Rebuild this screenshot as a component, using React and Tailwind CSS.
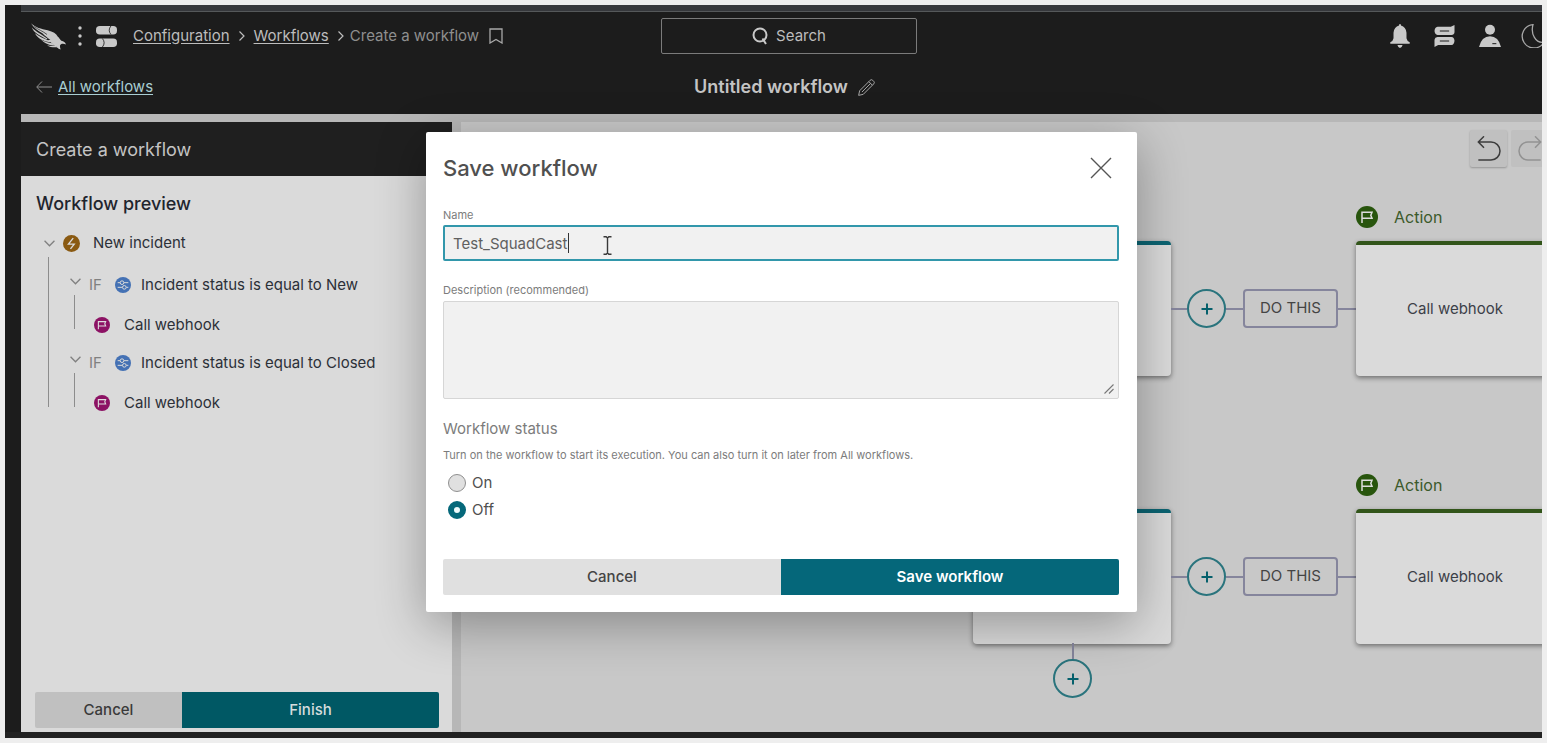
import React, { useState } from "react";

function FalconLogo() {
  return (
    <svg className="w-[35px] h-[27px]" viewBox="0 0 105 80" fill="#c9c9c9" aria-hidden="true">
      <path d="M0 0 C14 13 30 17 50 21 C66 25 76 31 80 40 C85 44 87 49 91 53 C98 54 103 58 105 64 C99 61 94 61 90 63 C86 65 86 69 89 79 C80 76 76 70 69 66 C64 60 58 57 50 51 L58 50 C50 44 42 38 34 30 C20 23 8 13 0 0 Z" />
      <path d="M2 12 C14 26 32 32 50 47 L46 48 C30 38 8 30 2 12 Z" />
      <path d="M12 30 C24 40 38 46 58 54 L56 57 C38 54 20 46 12 30 Z" />
      <path d="M30 49 C40 57 52 58 64 60 L72 67 C56 67 42 62 30 49 Z" />
      <path d="M48 66 C56 69 64 68 74 68 L78 72 C68 73 56 72 48 66 Z" />
      <path d="M10 10 C22 20 36 24 48 34" stroke="#1c1c1c" strokeWidth="2" fill="none" />
    </svg>
  );
}

function TogglesIcon() {
  return (
    <svg className="w-[21px] h-[21px]" viewBox="0 0 62 62" aria-hidden="true">
      <rect x="0" y="0" width="62" height="25" rx="11" fill="#c9c9c9" />
      <rect x="0" y="37" width="62" height="25" rx="11" fill="#c9c9c9" />
      <path d="M44 0 Q34 12.500 44 25 M19 37 Q29 49.500 19 62" fill="none" stroke="#1c1c1c" strokeWidth="2.500" />
    </svg>
  );
}

function Chevron({ className }) {
  return (
    <svg className={className} viewBox="0 0 10 10" fill="none" stroke="currentColor" aria-hidden="true">
      <path d="M0.500 2.500 L5 7 L9.500 2.500" strokeWidth="1.200" />
    </svg>
  );
}

function FlagBadge({ className, color }) {
  return (
    <svg className={className} viewBox="0 0 22 22" aria-hidden="true">
      <circle cx="11" cy="11" r="11" fill={color} />
      <path d="M6 17 V6.300 H16 L14.800 9.300 L16 12.300 H6" fill="none" stroke="#dddddd" strokeWidth="1.500" />
    </svg>
  );
}

function BoltBadge() {
  return (
    <svg className="size-[17px] shrink-0" viewBox="0 0 50 50" aria-hidden="true">
      <circle cx="25" cy="25" r="25" fill="#8a5a12" />
      <path d="M30 9 L16 27 H33 L22 41" fill="none" stroke="#dadada" strokeWidth="4" />
    </svg>
  );
}

function ConditionBadge() {
  return (
    <svg className="size-4 shrink-0" viewBox="0 0 48 48" fill="none" stroke="#dadada" strokeWidth="3" aria-hidden="true">
      <circle cx="24" cy="24" r="24" fill="#4471b4" stroke="none" />
      <path d="M8 17 H15 M27 17 H40 M8 31 H22 M34 31 H40" />
      <circle cx="21" cy="17" r="5.500" />
      <circle cx="28" cy="31" r="5.500" />
    </svg>
  );
}

function Header() {
  return (
    <header className="bg-[#1c1c1c] h-[102px] shrink-0 text-[#bdbdbd]">
      <div className="grid grid-cols-[1fr_256px_1fr] items-center h-12">
        <div className="flex items-center pl-[10px]">
          <a href="#home" aria-label="Home"><FalconLogo /></a>
          <svg className="w-1 h-5 ml-3" viewBox="0 0 4 20" fill="#c9c9c9" aria-hidden="true">
            <circle cx="2" cy="2" r="1.700" /><circle cx="2" cy="10" r="1.700" /><circle cx="2" cy="18" r="1.700" />
          </svg>
          <span className="ml-[14px]"><TogglesIcon /></span>
          <nav aria-label="Breadcrumb" className="flex items-center text-[15px] ml-4 whitespace-nowrap">
            <a href="#configuration" className="underline underline-offset-2">Configuration</a>
            <Chevron className="size-[10px] mx-[7px] -rotate-90" />
            <a href="#workflows" className="underline underline-offset-2">Workflows</a>
            <Chevron className="size-[10px] ml-[7px] mr-1 -rotate-90" />
            <span className="text-[#8f8f8f]">Create a workflow</span>
          </nav>
          <button aria-label="Bookmark" className="ml-[10px]">
            <svg className="w-[14px] h-4" viewBox="0 0 14 16" fill="none" stroke="#a8a8a8" strokeWidth="1.300" aria-hidden="true">
              <path d="M1 1 H13 V15 L7 11.500 L1 15 Z" />
            </svg>
          </button>
        </div>
        <button className="flex items-center justify-center gap-2 h-9 border border-[#7b7b7b] rounded-xs text-[15px]">
          <svg className="w-4 h-[18px]" viewBox="0 0 16 18" fill="none" stroke="#c9c9c9" strokeWidth="2" aria-hidden="true">
            <circle cx="8" cy="8" r="6.500" /><path d="M10.500 11.500 L14 17" />
          </svg>
          Search
        </button>
        <div className="flex items-center justify-end gap-6 pr-3">
          <button aria-label="Notifications">
            <svg className="w-5 h-6" viewBox="0 0 60 74" fill="#c9c9c9" aria-hidden="true">
              <path d="M27 2 Q30 -2 33 2 V5 Q48 9 50 27 V44 Q51 52 60 56 V61 H0 V56 Q9 52 10 44 V27 Q12 9 27 5 Z M22 65 H38 Q36 73 30 74 Q24 73 22 65 Z" />
            </svg>
          </button>
          <button aria-label="Messages">
            <svg className="w-[21px] h-[22px]" viewBox="0 0 62 66" aria-hidden="true">
              <path d="M10 5 H50 L61 0 V22 Q60 30 52 30 H10 Q2 29 1 18 Q2 6 10 5 Z M10 36 H52 Q60 37 61 47 Q60 59 52 60 H12 L1 66 V44 Q2 37 10 36 Z" fill="#c9c9c9" />
              <path d="M17 18 H45 M17 48 H45" stroke="#1c1c1c" strokeWidth="3" />
            </svg>
          </button>
          <button aria-label="Account">
            <svg className="w-[22px] h-6" viewBox="0 0 66 72" fill="#c9c9c9" aria-hidden="true">
              <circle cx="33" cy="17" r="15" />
              <path d="M0 69 Q8 37 33 37 Q58 37 66 69 Z" />
              <path d="M40 59 H52" stroke="#1c1c1c" strokeWidth="3" />
            </svg>
          </button>
          <button aria-label="Dark mode" className="-ml-1">
            <svg className="w-6 h-6" viewBox="0 0 72 74" fill="none" stroke="#a8a8a8" strokeWidth="4" aria-hidden="true">
              <path d="M36 2 A36 36 0 1 0 70 56 C44 60 28 30 36 2 Z" />
            </svg>
          </button>
        </div>
      </div>
      <div className="grid grid-cols-[1fr_auto_1fr] items-center h-[54px] pl-[15px] pr-6">
        <a href="#all-workflows" className="flex items-center gap-[6px] text-[15px] text-[#a9cdd2]">
          <svg className="w-4 h-3" viewBox="0 0 16 12" fill="none" stroke="#8f8f8f" aria-hidden="true">
            <path d="M16 6 H1 M6 0.500 L0.700 6 L6 11.500" />
          </svg>
          <span className="underline underline-offset-2">All workflows</span>
        </a>
        <h1 className="flex items-center gap-[10px] text-lg font-semibold text-[#c4c4c4]">
          Untitled workflow
          <button aria-label="Rename workflow">
            <svg className="size-[17px]" viewBox="0 0 52 52" fill="none" stroke="#a8a8a8" strokeWidth="3" aria-hidden="true">
              <path d="M2 50 L5 36 L37 4 Q41 0 45 4 L48 7 Q52 11 48 15 L16 47 Z M33 8 L44 19 M38 14 L12 40" />
            </svg>
          </button>
        </h1>
      </div>
    </header>
  );
}

function Branch({ label }) {
  return (
    <li>
      <div className="flex items-center h-5 pl-[22px]">
        <Chevron className="size-[11px] mb-2 text-[#808080]" />
        <span className="ml-2 w-[26px] text-[#808080]">IF</span>
        <ConditionBadge />
        <span className="ml-[10px]">{label}</span>
      </div>
      <div className="relative pt-5 pb-[18px] before:absolute before:left-[26px] before:top-0 before:h-[34px] before:w-px before:bg-[#8c8c8c]">
        <div className="flex items-center h-5 pl-[46px] gap-[14px]">
          <FlagBadge className="size-4" color="#8c1264" />
          Call webhook
        </div>
      </div>
    </li>
  );
}

function Sidebar() {
  return (
    <aside className="w-[431px] shrink-0 flex flex-col bg-[#dadada]">
      <h2 className="bg-[#1f1f1f] text-[#c4c4c4] text-lg h-[54px] shrink-0 flex items-center px-[15px] pt-[2px]">Create a workflow</h2>
      <div className="flex-1 px-[15px] pt-[14px] text-[15px] text-[#2c3038]">
        <h3 className="text-lg font-medium leading-7 text-[#1f252e]">Workflow preview</h3>
        <div className="flex items-center h-5 mt-[15px] pl-2">
          <Chevron className="size-[11px] text-[#808080]" />
          <span className="flex ml-2 mr-[13px]"><BoltBadge /></span>
          New incident
        </div>
        <ul className="relative ml-3 pt-[22px] before:absolute before:left-0 before:top-1 before:h-[150px] before:w-px before:bg-[#8c8c8c]">
          <Branch label="Incident status is equal to New" />
          <Branch label="Incident status is equal to Closed" />
        </ul>
      </div>
      <div className="flex pl-[14px] pr-[13px] pb-1 text-[15px] font-medium">
        <button className="w-[147px] h-9 bg-[#c0c0c0] text-[#3a3a3a] rounded-l-xs">Cancel</button>
        <button className="flex-1 h-9 bg-[#005864] text-[#d5dcdd] rounded-r-xs">Finish</button>
      </div>
    </aside>
  );
}

function AddStep() {
  return (
    <button aria-label="Add step" className="size-[39px] shrink-0 flex items-center justify-center rounded-full border-2 border-[#2a747d]">
      <svg className="size-3" viewBox="0 0 12 12" stroke="#05606c" strokeWidth="2" aria-hidden="true">
        <path d="M6 0.500 V11.500 M0.500 6 H11.500" />
      </svg>
    </button>
  );
}

function FlowRow({ className }) {
  return (
    <div className={className}>
      <div className="relative flex items-center w-max">
        <div className="w-[198px] h-[135px] rounded-sm bg-[#dadada] border-t-4 border-[#0c6472] shadow-[0_2px_5px_rgba(0,0,0,0.45)]" />
        <span className="w-4 h-[2px] bg-[#85859c]" />
        <AddStep />
        <span className="w-[17px] h-[2px] bg-[#85859c]" />
        <span className="w-[95px] h-[39px] flex items-center justify-center border-2 border-[#85859c] rounded-sm text-[15px] text-[#444444]">DO THIS</span>
        <span className="w-[18px] h-[2px] bg-[#85859c]" />
        <div className="relative w-[198px] h-[135px] pb-[2px] flex items-center justify-center rounded-sm bg-[#dadada] border-t-4 border-[#32551a] shadow-[0_2px_5px_rgba(0,0,0,0.45)] text-[15px] text-[#3c4048]">
          <div className="absolute left-0 bottom-full mb-4 flex items-center gap-4 text-base text-[#3b5a2b]">
            <FlagBadge className="size-[22px]" color="#28550d" />
            Action
          </div>
          Call webhook
        </div>
      </div>
    </div>
  );
}

function Canvas() {
  return (
    <main className="relative flex-1 bg-[#c8c8c8] overflow-hidden">
      <div className="flex justify-end gap-1 pt-2 pr-[9px]">
        <button aria-label="Undo" className="w-[37px] h-[37px] flex items-center justify-center bg-[#c0c0c0] rounded-xs shadow-[0_1px_2px_rgba(0,0,0,0.25)]">
          <svg className="w-6 h-[25px]" viewBox="0 0 70 75" fill="none" stroke="#3c3c3c" strokeWidth="4.500" aria-hidden="true">
            <path d="M20 1 L3 18 L20 35 M3 18 H41 A27 27 0 0 1 41 72 H3" />
          </svg>
        </button>
        <button aria-label="Redo" disabled className="w-[37px] h-[37px] flex items-center justify-center bg-[#c0c0c0] rounded-xs">
          <svg className="w-6 h-[25px]" viewBox="0 0 70 75" fill="none" stroke="#929292" strokeWidth="4.500" aria-hidden="true">
            <path d="M50 1 L67 18 L50 35 M67 18 H29 A27 27 0 0 0 29 72 H67" />
          </svg>
        </button>
      </div>
      <FlowRow className="absolute left-[512px] top-[119px]" />
      <FlowRow className="absolute left-[512px] top-[387px]" />
      <div className="absolute left-[592px] top-[521px] flex flex-col items-center">
        <span className="w-[2px] h-4 bg-[#85859c]" />
        <AddStep />
      </div>
    </main>
  );
}

function SaveDialog() {
  const [name, setName] = useState("Test_SquadCast");
  const [status, setStatus] = useState("off");
  const radio = "appearance-none size-[18px] rounded-full border border-[#8f8f8f] bg-[#e0e0e0] checked:border-[6px] checked:border-[#05687a] checked:bg-[#eefafb]";
  return (
    <div role="dialog" aria-labelledby="save-title" className="w-[711px] bg-white rounded-xs pl-[17px] pr-[18px] pt-[18px] pb-[17px] text-[#505050] shadow-[0_12px_50px_rgba(0,0,0,0.32)]">
      <div className="flex items-center justify-between h-9">
        <h2 id="save-title" className="text-[22px] font-medium">Save workflow</h2>
        <button aria-label="Close" className="mr-[7px]">
          <svg className="size-[22px]" viewBox="0 0 22 22" stroke="#555555" strokeWidth="1.400" aria-hidden="true">
            <path d="M1 1 L21 21 M21 1 L1 21" />
          </svg>
        </button>
      </div>
      <label htmlFor="wf-name" className="block mt-[21px] text-[11px] leading-4 text-[#7c7c7c]">Name</label>
      <div className="relative mt-[2px]">
        <input
          id="wf-name"
          value={name}
          onChange={(e) => setName(e.target.value)}
          className="block w-full h-9 px-2 bg-[#f1f1f1] border-2 border-[#3297ab] rounded-xs text-[15px] text-[#606060] outline-none"
        />
        <span className="absolute left-[125px] top-2 w-px h-5 bg-[#333333]" />
        <svg className="absolute left-[160px] top-[11px] w-[9px] h-[19px]" viewBox="0 0 9 19" fill="none" stroke="#3a3a3a" strokeWidth="1.400" aria-hidden="true">
          <path d="M0.500 0.800 H3.200 L4.500 2 L5.800 0.800 H8.500 M4.500 2 V17 M0.500 18.200 H3.200 L4.500 17 L5.800 18.200 H8.500" />
        </svg>
      </div>
      <label htmlFor="wf-desc" className="block mt-[21px] text-[11px] leading-4 text-[#7c7c7c]">Description (recommended)</label>
      <div className="relative mt-[3px]">
        <textarea id="wf-desc" className="block w-full h-[98px] p-2 bg-[#f1f1f1] border border-[#d6d6d6] rounded-xs text-[15px] resize-none outline-none" />
        <svg className="absolute right-[5px] bottom-[5px] size-[10px]" viewBox="0 0 10 10" stroke="#777777" strokeWidth="1.100" aria-hidden="true">
          <path d="M0.500 9.500 L9.500 0.500 M5 9.500 L9.500 5" />
        </svg>
      </div>
      <fieldset className="mt-5 text-[15px]">
        <legend className="leading-5 text-[#7c7c7c]">Workflow status</legend>
        <p className="mt-2 text-[11px] leading-4 text-[#7c7c7c]">Turn on the workflow to start its execution. You can also turn it on later from All workflows.</p>
        <label className="flex items-center gap-[6px] h-5 mt-[10px] ml-[5px]">
          <input type="radio" name="status" checked={status === "on"} onChange={() => setStatus("on")} className={radio} />
          On
        </label>
        <label className="flex items-center gap-[6px] h-5 mt-[7px] ml-[5px]">
          <input type="radio" name="status" checked={status === "off"} onChange={() => setStatus("off")} className={radio} />
          Off
        </label>
      </fieldset>
      <div className="flex mt-[39px] text-[15px]">
        <button className="flex-1 h-9 bg-[#e0e0e0] font-medium text-[#444444] rounded-l-xs">Cancel</button>
        <button className="flex-1 h-9 bg-[#05677a] font-semibold text-white rounded-r-xs">Save workflow</button>
      </div>
    </div>
  );
}

export default function App() {
  return (
    <div className="h-screen bg-[#eeeeee] p-[5px] font-['Inter',sans-serif]">
      <div className="relative h-full flex flex-col bg-[#1c1c1c] overflow-hidden">
        <div className="h-[7px] shrink-0 bg-[#36383c] border-b border-[#55585a] ml-4" />
        <div className="flex-1 min-h-0 flex flex-col ml-4 -mr-[15px] bg-[#b7b7b7]">
          <Header />
          <div className="flex-1 min-h-0 flex gap-[9px] pt-2">
            <Sidebar />
            <Canvas />
          </div>
        </div>
        <div className="h-[6px] shrink-0 bg-[#222222]" />
        <div className="absolute inset-y-0 left-4 right-0 flex justify-center items-start pt-[127px]">
          <SaveDialog />
        </div>
      </div>
    </div>
  );
}
